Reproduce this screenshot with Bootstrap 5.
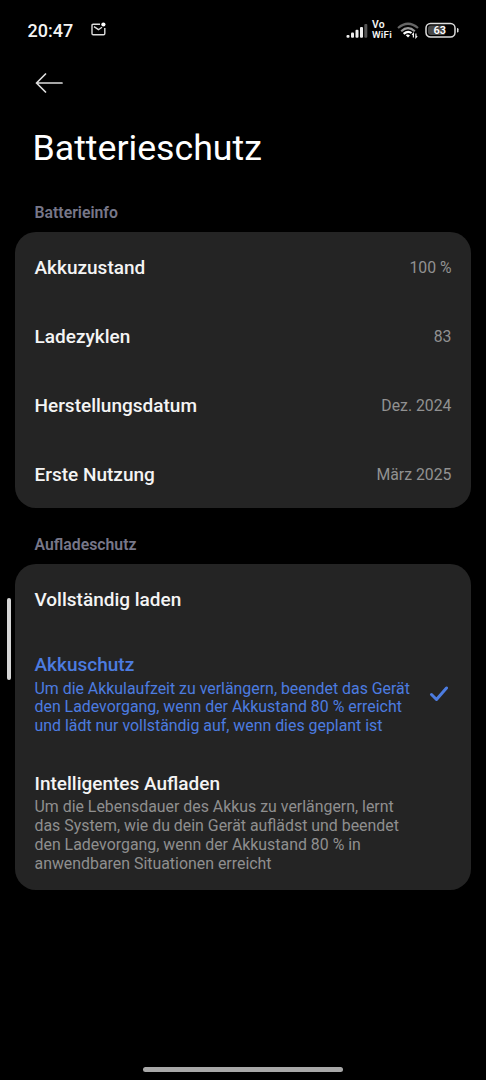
<!DOCTYPE html>
<html lang="de" data-bs-theme="dark">
<head>
<meta charset="utf-8">
<meta name="viewport" content="width=device-width, initial-scale=1">
<title>Batterieschutz</title>
<link href="https://cdn.jsdelivr.net/npm/bootstrap@5.3.0/dist/css/bootstrap.min.css" rel="stylesheet">
<style>
  body { background: #000; color: #f4f4f4; font-family: Roboto, "Noto Sans", sans-serif; }
  svg { display: block; flex: none; }
  .status-bar { height: 60px; padding: 0 27px 0 27.5px; }
  .clock { font-size: 18px; font-weight: 500; line-height: 22px; padding-top: 1px; }
  .mail-icon { margin: 0 auto 2px 17.5px; }
  .battery-icon { margin-left: 6px; }
  .vowifi { font-size: 9.8px; line-height: 10px; font-weight: 600; letter-spacing: .2px; width: 21px; margin: 0 4px; }
  .vowifi-top { font-size: 10.4px; }
  .app-bar { height: 46px; padding-left: 35px; }
  .page-title { font-size: 35.7px; font-weight: 400; line-height: 42px; margin: 21px 0 0 32.5px; }
  .section-label { font-size: 15.8px; font-weight: 600; line-height: 20px; color: #777789; margin: 0 0 9px 34.5px; }
  .info-label { margin-top: 33.7px; }
  .charge-label { margin-top: 27.1px; }
  .settings { --bs-list-group-bg: #242424; --bs-list-group-border-radius: 21px; margin: 0 15px; }
  .settings .list-group-item { border: 0; padding: 0 19.5px; color: #f4f4f4; }
  .settings .row-single { height: 69.1px; padding-top: 3px; }
  .row-title { font-size: 19px; font-weight: 500; line-height: 22px; }
  .row-value { font-size: 15.8px; line-height: 20px; color: #919191; }
  .settings .row-choice { padding: 20.5px 22px 16.5px 19.5px; }
  .row-desc { font-size: 15.9px; line-height: 18.7px; color: #8f8f8f; margin-top: 3.8px; white-space: nowrap; }
  .selected-choice .row-title, .selected-choice .row-desc { color: #4c7ce0; }
  .edge-handle { left: 7px; top: 598px; width: 4px; height: 82px; background: #d5d5d5; }
  .home-bar { left: 143px; top: 1067px; width: 200px; height: 5px; background: #a8a8a8; }
</style>
</head>
<body class="position-relative vh-100 overflow-hidden">
  <header>
    <div class="status-bar d-flex align-items-center">
      <span class="clock">20:47</span>
      <svg class="mail-icon" width="16" height="14" viewBox="0 0 16 14" fill="none" stroke="#ddd" stroke-width="1.4">
        <path d="M9 2.2H2.2Q1 2.2 1 3.4v8.2q0 1.2 1.2 1.2h10.4q1.2 0 1.2-1.2V6"/>
        <path d="M3 4.7 7.5 7.7 11 5.2"/>
        <circle cx="12.4" cy="2.5" r="2.1" fill="#fff" stroke="none"/>
      </svg>
      <svg width="22" height="15" viewBox="0 0 22 15" fill="#eee">
        <rect x="0.5" y="12" width="3" height="2.7" rx="1"/><rect x="5" y="9.6" width="3" height="5.1" rx="1"/>
        <rect x="9.5" y="6.7" width="3" height="8" rx="1"/><rect x="14" y="4" width="3" height="10.7" rx="1"/>
        <rect x="18.3" y="1" width="3" height="13.7" rx="1" fill="#555"/>
      </svg>
      <div class="vowifi d-flex flex-column"><span class="vowifi-top">Vo</span><span>WiFi</span></div>
      <svg width="22" height="17" viewBox="0 0 22 17" fill="none" stroke-width="2.2">
        <path d="M1 6Q11-2.5 21 6" stroke="#666"/>
        <path d="M4.2 9.2Q11 3 17.8 9.2" stroke="#999"/>
        <path d="M6.6 11.8Q11 8.2 14.5 11" stroke="#fff"/>
        <path d="m8.6 13 2.4 2.6 2-2.2q-2-1.6-4.4-.4Z" fill="#fff"/>
        <path d="M16.4 15.5v-4l-1.3 1.4M18.9 11.5v4l1.3-1.4" stroke="#eee" stroke-width="1.2"/>
      </svg>
      <svg class="battery-icon" width="34" height="17" viewBox="0 0 34 17">
        <rect x="1" y="1.5" width="29" height="13.6" rx="4.5" fill="#000" stroke="#ddd" stroke-width="1.5"/>
        <path d="M6 3.5h13.5v9.6H6q-3 0-3-3V6.5q0-3 3-3Z" fill="#484848"/>
        <path d="M32 6q1.5 0 1.5 1.2v2q0 1.2-1.5 1.2Z" fill="#ddd"/>
        <text x="14.8" y="12.2" text-anchor="middle" font-size="11" font-weight="600" fill="#fff">63</text>
      </svg>
    </div>
    <nav class="app-bar d-flex align-items-center" aria-label="Zurück">
      <svg width="28" height="20" viewBox="0 0 28 20" fill="none" stroke="#ddd" stroke-width="1.7" stroke-linecap="round" stroke-linejoin="round"><path d="M27 10H1.5M10.5 1 1.5 10l9 9"/></svg>
    </nav>
    <h1 class="page-title">Batterieschutz</h1>
  </header>
  <main>
    <h2 class="section-label info-label">Batterieinfo</h2>
    <div class="list-group settings">
      <div class="list-group-item row-single d-flex align-items-center justify-content-between"><span class="row-title">Akkuzustand</span><span class="row-value">100 %</span></div>
      <div class="list-group-item row-single d-flex align-items-center justify-content-between"><span class="row-title">Ladezyklen</span><span class="row-value">83</span></div>
      <div class="list-group-item row-single d-flex align-items-center justify-content-between"><span class="row-title">Herstellungsdatum</span><span class="row-value">Dez. 2024</span></div>
      <div class="list-group-item row-single d-flex align-items-center justify-content-between"><span class="row-title">Erste Nutzung</span><span class="row-value">März 2025</span></div>
    </div>
    <h2 class="section-label charge-label">Aufladeschutz</h2>
    <div class="list-group settings">
      <div class="list-group-item row-single d-flex align-items-center"><span class="row-title">Vollständig laden</span></div>
      <div class="list-group-item row-choice selected-choice d-flex align-items-center justify-content-between">
        <div>
          <div class="row-title">Akkuschutz</div>
          <div class="row-desc">Um die Akkulaufzeit zu verlängern, beendet das Gerät<br>den Ladevorgang, wenn der Akkustand 80 % erreicht<br>und lädt nur vollständig auf, wenn dies geplant ist</div>
        </div>
        <svg width="20" height="18" viewBox="0 0 20 18" fill="none" stroke="#4c7ce0" stroke-width="3" stroke-linecap="round" stroke-linejoin="round"><path d="m2.5 8.5 5 5L17.5 2"/></svg>
      </div>
      <div class="list-group-item row-choice">
        <div class="row-title">Intelligentes Aufladen</div>
        <div class="row-desc">Um die Lebensdauer des Akkus zu verlängern, lernt<br>das System, wie du dein Gerät auflädst und beendet<br>den Ladevorgang, wenn der Akkustand 80 % in<br>anwendbaren Situationen erreicht</div>
      </div>
    </div>
  </main>
  <div class="edge-handle position-absolute rounded-pill"></div>
  <div class="home-bar position-absolute rounded-pill"></div>
<script src="https://cdn.jsdelivr.net/npm/bootstrap@5.3.0/dist/js/bootstrap.bundle.min.js"></script>
</body>
</html>
